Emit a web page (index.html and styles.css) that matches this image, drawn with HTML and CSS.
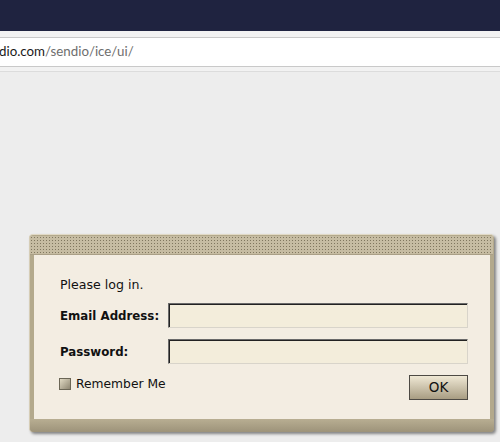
FILE: index.html
```html
<!DOCTYPE html>
<html>
<head>
<meta charset="utf-8">
<link rel="stylesheet" href="styles.css">
</head>
<body>
<div class="topbar"></div>
<div class="toolbar">
  <div class="urlbar"><span class="host">dio.com</span><span class="path">/sendio/ice/ui/</span></div>
</div>
<div class="page">
  <div class="dialog">
    <div class="titlebar"></div>
    <div class="body">
      <p class="intro">Please log in.</p>
      <div class="form">
        <label class="lbl">Email Address:</label>
        <div class="field"></div>
        <label class="lbl">Password:</label>
        <div class="field"></div>
      </div>
      <div class="actions">
        <div class="remember"><span class="check"></span><span>Remember Me</span></div>
        <div class="ok">OK</div>
      </div>
    </div>
    <div class="footbar"></div>
  </div>
</div>
</body>
</html>
```
FILE: styles.css
```css
html, body { margin: 0; padding: 0; }
body { width: 500px; height: 442px; overflow: hidden; background: #ededed; font-family: "DejaVu Sans", Verdana, sans-serif; }
.topbar { height: 31px; background: #1f2340; }
.toolbar { height: 41px; background: #f2f2f2; border-bottom: 1px solid #dcdcdc; padding-top: 6px; box-sizing: border-box; }
.urlbar { height: 30px; box-sizing: border-box; background: #fff; border-top: 1px solid #c9c9c9; border-bottom: 1px solid #c9c9c9; font-family: Lato, "Noto Sans", sans-serif; font-size: 13.3px; line-height: 27px; margin-left: -1px; white-space: nowrap; }
.host { color: #1a1a1a; }
.path { color: #6e6e6e; }
.page { padding: 162px 0 0 29px; }
.dialog { width: 465px; height: 198px; box-sizing: border-box; background: #b3a98c; border-radius: 4px; box-shadow: 2px 2px 3px rgba(0,0,0,0.45); border-top: 1px solid #e2dac6; border-left: 1px solid #d6cdb6; padding: 0 4px 0 4px; display: flex; flex-direction: column; }
.titlebar { height: 18px; margin: 1px -3px 0 -4px; background-color: #80775f;
  background-image: linear-gradient(to bottom, transparent 1px, #c6bca2 1px), linear-gradient(to right, transparent 1px, #c6bca2 1px);
  background-size: 3px 3px; background-position: 1px 1px; border-bottom: 1px solid #aaa087; }
.body { flex: 1; background: #f3ede2; padding: 21px 22px 0 26px; font-size: 12.6px; color: #111; }
.intro { margin: 0 0 9px; line-height: 18px; }
.form { display: grid; grid-template-columns: 108px 1fr; row-gap: 11px; align-items: center; }
.lbl { font-weight: bold; font-size: 11.8px; }
.field { height: 25px; box-sizing: border-box; background: #f3eddb; border: 1px solid; border-color: #6a6a6a #d8d4ca #d8d4ca #6a6a6a; box-shadow: inset 1px 1px 0 #222; }
.actions { display: flex; justify-content: space-between; align-items: center; margin-top: 11px; }
.remember { display: flex; align-items: center; gap: 5px; margin-top: -7px; margin-left: -1px; font-size: 12.3px; }
.check { width: 12px; height: 12px; box-sizing: border-box; border: 1px solid #6b6656; background: linear-gradient(135deg, #e1dac4, #8d8571); }
.ok { width: 59px; height: 25px; box-sizing: border-box; border: 1px solid #4d4a44; background: linear-gradient(to bottom, #efe8d4, #a89d83); text-align: center; line-height: 23px; font-size: 13.5px; color: #111; }
.footbar { height: 13px; margin: 0 -4px; background: linear-gradient(to bottom, #b8ae92, #9d937a); border-radius: 0 0 4px 4px; }
```
